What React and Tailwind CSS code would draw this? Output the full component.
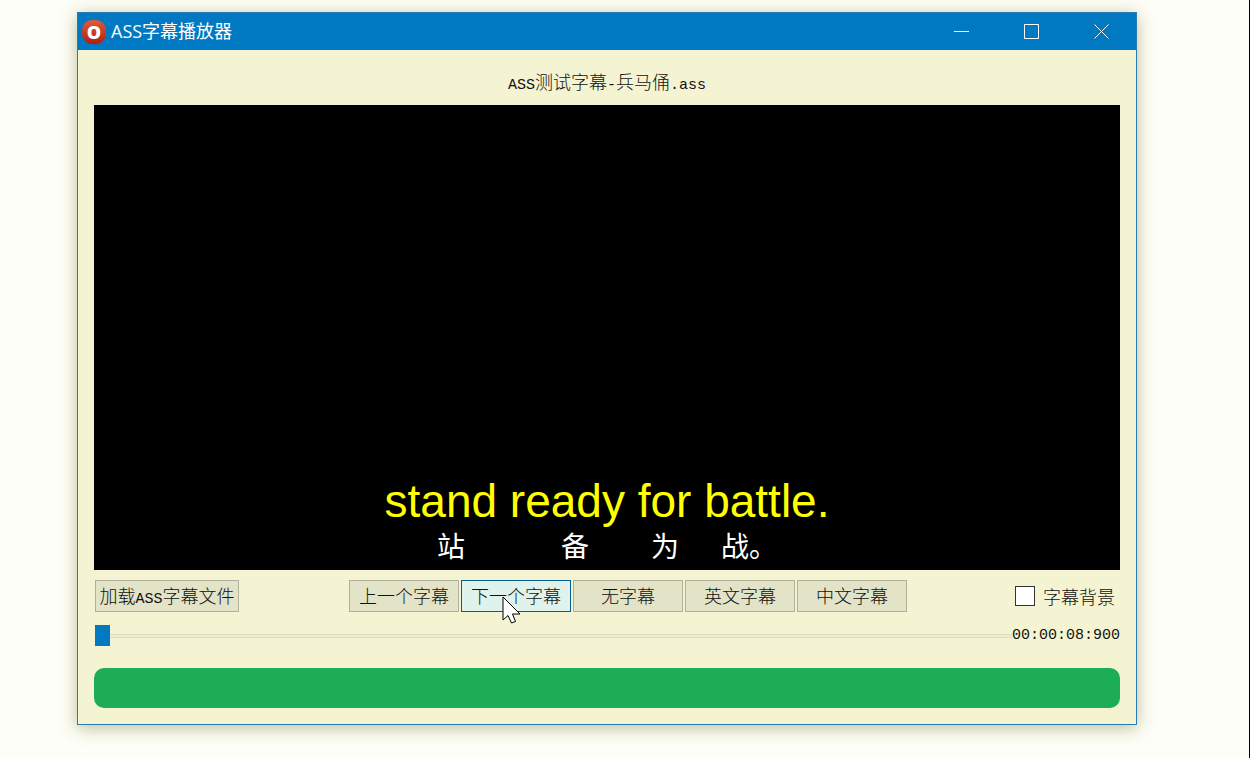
import React, { useState } from 'react';

const TRACKS = ['上一个字幕', '下一个字幕', '无字幕', '英文字幕', '中文字幕'];

function Logo() {
  return (
    <span className="flex size-6 items-center justify-center rounded-[10px] bg-linear-to-b from-[#e05a38] to-[#b01c14] font-['Open_Sans',sans-serif] text-lg leading-none font-extrabold text-white">
      O
    </span>
  );
}

function WindowButton({ label, children }) {
  return (
    <button type="button" aria-label={label} className="flex h-full w-[70px] items-center justify-center hover:bg-white/10">
      <svg viewBox="0 0 15 15" className="size-[15px]" fill="none" stroke="#fff" strokeWidth="1">
        {children}
      </svg>
    </button>
  );
}

// Half-width latin next to full-width hanzi
function Latin({ children }) {
  return <span className="font-['Liberation_Mono',monospace] text-[15px] leading-none">{children}</span>;
}

function PushButton({ active, onClick, className = '', children }) {
  return (
    <button
      type="button"
      onClick={onClick}
      className={`relative h-8 border pb-0.5 text-center leading-7 whitespace-nowrap ${
        active ? 'border-[#005f90] bg-[#e0f2ec]' : 'border-[#b0b09c] bg-[#e3e3c8]'
      } ${className}`}
    >
      {children}
    </button>
  );
}

function Cursor() {
  return (
    <svg viewBox="0 0 19 28" className="pointer-events-none absolute top-[15px] left-10 z-10 h-7 w-[19px]">
      <path
        d="M1 1 V24 L6 19.5 L9.5 27 L13.5 25.5 L10.5 18 H18 Z"
        fill="#fff"
        stroke="#000"
        strokeWidth="1"
      />
    </svg>
  );
}

export default function App() {
  const [active, setActive] = useState('下一个字幕');
  const [position, setPosition] = useState(0);
  const [background, setBackground] = useState(false);

  return (
    <div className="min-h-screen border-r border-black bg-[#fefef8] pt-3 pr-28 pb-8 pl-[77px] font-['Noto_Sans_CJK_SC',sans-serif] text-lg font-light text-[#111]">
      <div className="border border-[#2b7ab5] bg-[#f4f4d2] shadow-[0_3px_16px_rgba(110,110,30,0.45)]">
        {/* Title bar */}
        <header className="flex h-[37px] items-center bg-[#0079c2] text-white">
          <div className="flex flex-1 items-center gap-[5px] pl-1">
            <Logo />
            <h1 className="pb-0.5 font-['Open_Sans','Noto_Sans_CJK_SC',sans-serif] text-lg leading-6 font-normal">ASS字幕播放器</h1>
          </div>
          <WindowButton label="最小化">
            <path d="M0 7.5H15" />
          </WindowButton>
          <WindowButton label="最大化">
            <path d="M.5 .5H14.5V14.5H.5Z" />
          </WindowButton>
          <WindowButton label="关闭">
            <path d="M.5 .5L14.5 14.5M14.5 .5L.5 14.5" />
          </WindowButton>
        </header>

        <main className="px-4 pt-4 pb-4">
          <p className="mb-[9px] text-center leading-[30px]">
            <Latin>ASS</Latin>测试字幕<Latin>-</Latin>兵马俑<Latin>.ass</Latin>
          </p>

          {/* Video */}
          <section className="flex aspect-[1026/465] w-full flex-col items-center justify-end bg-black pb-[7px]">
            <p className="font-['Liberation_Sans',sans-serif] text-[46px] leading-[52px] font-normal text-[#ffff00]">
              stand ready for battle.
            </p>
            <p className="flex text-[28px] leading-9 font-normal text-white">
              <span>站</span>
              <span className="ml-24">备</span>
              <span className="ml-[62px]">为</span>
              <span className="ml-[42px]">战。</span>
            </p>
          </section>

          {/* Controls */}
          <div className="mt-2.5 flex items-center justify-between">
            <PushButton className="ml-px w-36">
              加载<Latin>ASS</Latin>字幕文件
            </PushButton>
            <div className="ml-0.5 flex gap-0.5">
              {TRACKS.map((name) => (
                <PushButton key={name} active={active === name} onClick={() => setActive(name)} className="w-[110px]">
                  {name}
                  {name === '下一个字幕' && <Cursor />}
                </PushButton>
              ))}
            </div>
            <label className="flex items-center gap-2 pr-[5px]">
              <input
                type="checkbox"
                checked={background}
                onChange={(e) => setBackground(e.target.checked)}
                className="size-5 appearance-none border border-[#333] bg-white checked:bg-[#0079c2]"
              />
              字幕背景
            </label>
          </div>

          <div className="mt-3 flex h-6 items-center">
            <input
              type="range"
              aria-label="播放进度"
              min="0"
              max="100"
              value={position}
              onChange={(e) => setPosition(Number(e.target.value))}
              className="ml-px h-[21px] min-w-0 flex-1 appearance-none bg-transparent [&::-webkit-slider-runnable-track]:h-1 [&::-webkit-slider-runnable-track]:border-y [&::-webkit-slider-runnable-track]:border-[#dedebe] [&::-webkit-slider-runnable-track]:bg-[#ededd0] [&::-webkit-slider-thumb]:-mt-2.5 [&::-webkit-slider-thumb]:h-[21px] [&::-webkit-slider-thumb]:w-[15px] [&::-webkit-slider-thumb]:appearance-none [&::-webkit-slider-thumb]:bg-[#0079c2]"
            />
            <output className="font-['Liberation_Mono',monospace] text-[15px] leading-6 font-normal">00:00:08:900</output>
          </div>

          <div className="mt-5 h-10 rounded-[10px] bg-[#1cad56]" />
        </main>
      </div>
    </div>
  );
}
